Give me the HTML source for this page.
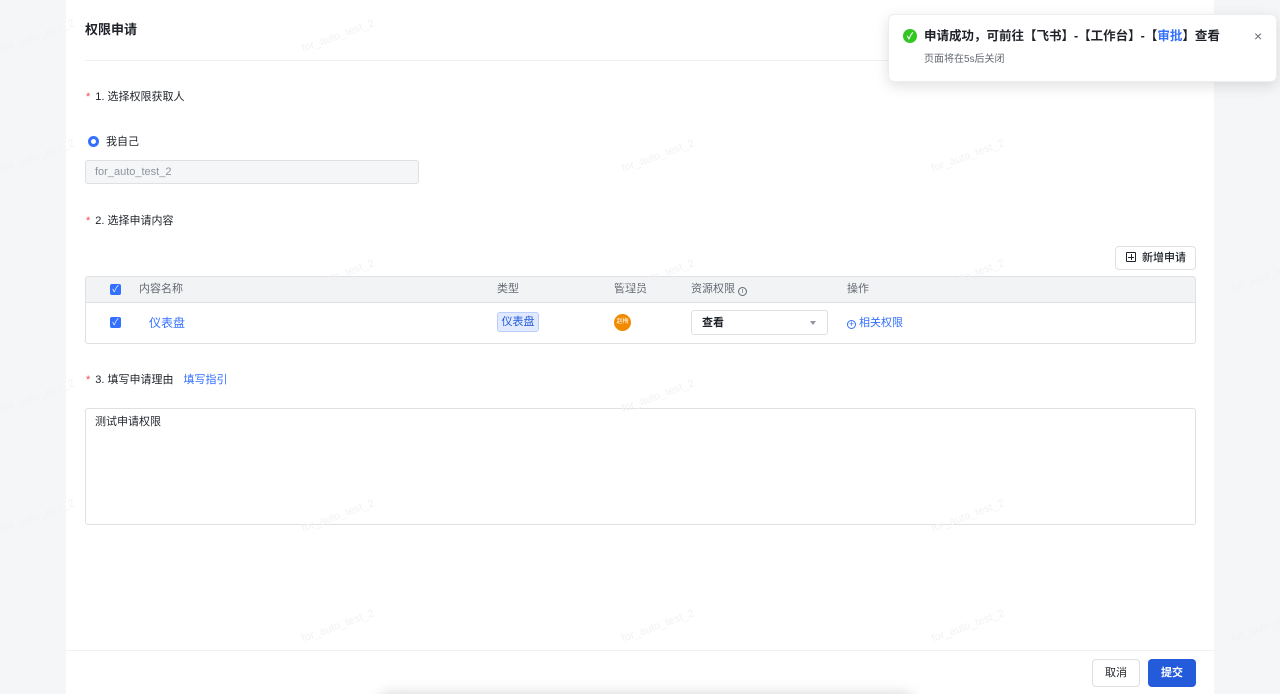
<!DOCTYPE html>
<html><head><meta charset="utf-8"><style>
*{box-sizing:border-box;margin:0;padding:0}
html,body{width:1280px;height:694px;overflow:hidden}
body{background:#f5f6f8;font-family:"Liberation Sans","Noto Sans CJK SC",sans-serif;font-size:12px;color:#1f2329;position:relative;line-height:1.2}
.panel{position:absolute;left:66px;top:0;width:1148px;height:694px;background:#fff;overflow:hidden}
.abs{position:absolute}
.lbl{font-size:11px;color:#1f2329}
.lbl .r{color:#f54a45;margin-right:5px}
.wm{position:absolute;color:#f1f2f3;font-size:11px;transform:rotate(-20deg);white-space:nowrap}
</style></head><body>
<div class="panel">
  <div class="abs" style="left:19px;top:22px;font-size:13px;font-weight:600">权限申请</div>
  <div class="abs" style="left:19px;top:60px;width:1110px;height:1px;background:#eff0f1"></div>
  <div class="abs lbl" style="left:20px;top:91px"><span class="r">*</span>1. 选择权限获取人</div>
  <div class="abs" style="left:22px;top:136px;width:11px;height:11px;border-radius:50%;background:#3370ff"><div style="position:absolute;left:3px;top:3px;width:5px;height:5px;border-radius:50%;background:#fff"></div></div>
  <div class="abs" style="left:40px;top:136px;font-size:11px">我自己</div>
  <div class="abs" style="left:19px;top:160px;width:334px;height:24px;border:1px solid #dee0e3;border-radius:3px;background:#f5f6f7;color:#8f959e;font-size:11px;padding:5px 9px">for_auto_test_2</div>
  <div class="abs lbl" style="left:20px;top:215px"><span class="r">*</span>2. 选择申请内容</div>
  <div class="abs" style="left:1049px;top:246px;width:81px;height:24px;border:1px solid #dee0e3;border-radius:4px;font-size:11px;padding:5px 0 0 10px;font-weight:500"><span style="display:inline-block;width:10px;height:10px;border:1px solid #1f2329;border-radius:1px;vertical-align:-1px;margin-right:6px;position:relative"><span style="position:absolute;left:1px;top:3.5px;width:6px;height:1px;background:#1f2329"></span><span style="position:absolute;left:3.5px;top:1px;width:1px;height:6px;background:#1f2329"></span></span>新增申请</div>
  <div class="abs" style="left:19px;top:276px;width:1111px;height:68px;border:1px solid #dee0e3;border-radius:3px;overflow:hidden">
    <div style="height:26px;background:#f2f3f5;border-bottom:1px solid #dee0e3;position:relative;font-size:11px;color:#646a73">
      <div class="abs" style="left:24px;top:7px;width:11px;height:11px;background:#3370ff;border-radius:2px;color:#fff;font-size:9px;text-align:center;line-height:11px">✓</div>
      <div class="abs" style="left:53px;top:6px">内容名称</div>
      <div class="abs" style="left:411px;top:6px">类型</div>
      <div class="abs" style="left:528px;top:6px">管理员</div>
      <div class="abs" style="left:605px;top:6px">资源权限 <span style="display:inline-block;width:9px;height:9px;border:1px solid #646a73;border-radius:50%;font-size:7px;line-height:8px;text-align:center;vertical-align:-1px">i</span></div>
      <div class="abs" style="left:761px;top:6px">操作</div>
    </div>
    <div style="position:relative;height:40px">
      <div class="abs" style="left:24px;top:14px;width:11px;height:11px;background:#3370ff;border-radius:2px;color:#fff;font-size:9px;text-align:center;line-height:11px">✓</div>
      <div class="abs" style="left:63px;top:13px;color:#3370ff;font-size:12px">仪表盘</div>
      <div class="abs" style="left:411px;top:9px;width:42px;height:20px;background:#e1eaff;border:1px solid #bacefd;border-radius:3px;color:#245bdb;font-size:11px;text-align:center;line-height:18px">仪表盘</div>
      <div class="abs" style="left:528px;top:11px;width:17px;height:17px;border-radius:50%;background:#f08a00;color:#fff;font-size:6px;text-align:center;line-height:17px">赵梅</div>
      <div class="abs" style="left:605px;top:7px;width:137px;height:25px;border:1px solid #dee0e3;border-radius:3px;padding:6px 10px;font-size:11px;font-weight:600">查看<span style="position:absolute;right:11px;top:10px;width:0;height:0;border-left:3.5px solid transparent;border-right:3.5px solid transparent;border-top:4px solid #8f959e"></span></div>
      <div class="abs" style="left:761px;top:14px;color:#3370ff;font-size:11px"><span style="display:inline-block;width:9px;height:9px;border:1px solid #3370ff;border-radius:50%;font-size:9px;line-height:7px;text-align:center;vertical-align:-1px">+</span> 相关权限</div>
    </div>
  </div>
  <div class="abs lbl" style="left:20px;top:374px"><span class="r">*</span>3. 填写申请理由<span style="color:#3370ff;margin-left:10px">填写指引</span></div>
  <div class="abs" style="left:19px;top:408px;width:1111px;height:117px;border:1px solid #dee0e3;border-radius:3px;padding:7px 9px;font-size:11px">测试申请权限</div>
  <div class="abs" style="left:0;top:650px;width:1148px;height:1px;background:#f0f1f2"></div>
  <div class="abs" style="left:1026px;top:659px;width:48px;height:28px;border:1px solid #dee0e3;border-radius:4px;font-size:11px;text-align:center;line-height:26px">取消</div>
  <div class="abs" style="left:1082px;top:659px;width:48px;height:28px;background:#245bdb;border-radius:4px;color:#fff;font-size:11px;text-align:center;line-height:28px;font-weight:600">提交</div>
  <div class="abs" style="left:310px;top:692px;width:540px;height:30px;border-radius:20px;background:#ddd;filter:blur(6px)"></div>
</div>
<div class="wm" style="left:0;top:30px">for_auto_test_2</div>
<div class="wm" style="left:300px;top:30px">for_auto_test_2</div>
<div class="wm" style="left:620px;top:150px">for_auto_test_2</div>
<div class="wm" style="left:930px;top:150px">for_auto_test_2</div>
<div class="wm" style="left:0;top:150px">for_auto_test_2</div>
<div class="wm" style="left:300px;top:270px">for_auto_test_2</div>
<div class="wm" style="left:620px;top:270px">for_auto_test_2</div>
<div class="wm" style="left:930px;top:270px">for_auto_test_2</div>
<div class="wm" style="left:1230px;top:270px">for_auto_test_2</div>
<div class="wm" style="left:0;top:390px">for_auto_test_2</div>
<div class="wm" style="left:620px;top:390px">for_auto_test_2</div>
<div class="wm" style="left:300px;top:510px">for_auto_test_2</div>
<div class="wm" style="left:930px;top:510px">for_auto_test_2</div>
<div class="wm" style="left:0;top:510px">for_auto_test_2</div>
<div class="wm" style="left:300px;top:620px">for_auto_test_2</div>
<div class="wm" style="left:620px;top:620px">for_auto_test_2</div>
<div class="wm" style="left:930px;top:620px">for_auto_test_2</div>
<div class="wm" style="left:1230px;top:620px">for_auto_test_2</div>
<div class="abs" style="left:888px;top:14px;width:389px;height:68px;background:#fff;border-radius:6px;box-shadow:0 4px 14px rgba(0,0,0,.12);border:1px solid #eceef0">
  <div class="abs" style="left:14px;top:14px;width:14px;height:14px;border-radius:50%;background:#34c724;color:#fff;font-size:9px;text-align:center;line-height:14px;font-weight:bold">✓</div>
  <div class="abs" style="left:35px;top:14px;font-size:12.5px;font-weight:600;white-space:nowrap">申请成功，可前往【飞书】-【工作台】-【<span style="color:#3370ff">审批</span>】查看</div>
  <div class="abs" style="left:35px;top:39px;font-size:10px;color:#646a73">页面将在5s后关闭</div>
  <div class="abs" style="left:365px;top:13px;font-size:14px;color:#646a73">×</div>
</div>
</body></html>
